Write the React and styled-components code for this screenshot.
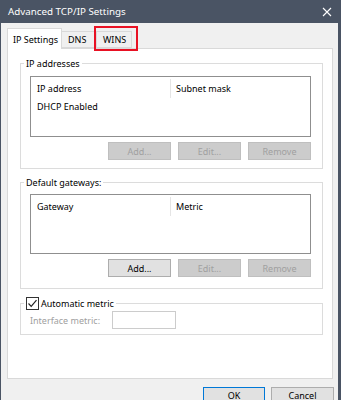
import React from 'react'
import styled, { createGlobalStyle } from 'styled-components'

const Global = createGlobalStyle`
  html, body { margin: 0; padding: 0; background: #f0f0f0; }
  body {
    font-family: "Noto Sans", "Open Sans", sans-serif;
    font-size: 9px;
    color: #000;
  }
`

const Window = styled.div`
  width: 341px;
  height: 400px;
  box-sizing: border-box;
  overflow: hidden;
  background: #f0f0f0;
  border-left: 1px solid #4a5464;
  border-right: 3px solid #4a5464;
  display: flex;
  flex-direction: column;
`

const TitleBar = styled.div`
  height: 23px;
  flex: none;
  background: #4a5464;
  color: #fff;
  display: flex;
  align-items: center;
  justify-content: space-between;
  padding: 0 6px 0 7px;
  font-size: 9.8px;
`

const Body = styled.div`
  padding: 5px 0 0 6px;
  display: flex;
  flex-direction: column;
`

const TabRow = styled.div`
  display: flex;
  align-items: flex-end;
  height: 20px;
`

const Tab = styled.div`
  position: relative;
  box-sizing: border-box;
  width: ${p => p.$w}px;
  height: ${p => (p.$active ? 21 : 17)}px;
  margin-bottom: ${p => (p.$active ? -1 : 0)}px;
  z-index: ${p => (p.$active ? 2 : 1)};
  background: ${p => (p.$active ? '#fff' : '#f0f0f0')};
  border: 1px solid #d9d9d9;
  border-bottom: ${p => (p.$active ? 'none' : '1px solid #d9d9d9')};
  border-left: ${p => (p.$first ? '1px solid #d9d9d9' : 'none')};
  padding-left: ${p => p.$pad}px;
  display: flex;
  align-items: center;
  white-space: nowrap;
  line-height: 1;

  ${p => p.$marked && `
    &::after {
      content: '';
      position: absolute;
      left: -3px;
      right: -7px;
      top: -6px;
      bottom: -4px;
      border: 2px solid #e81123;
    }
  `}
`

const Panel = styled.div`
  width: 326px;
  height: 331px;
  box-sizing: border-box;
  background: #fff;
  border: 1px solid #d9d9d9;
  display: flex;
  flex-direction: column;
`

const Group = styled.fieldset`
  margin: ${p => p.$top}px 9px 0 12px;
  border: 1px solid #dcdcdc;
  padding: 0 11px ${p => p.$bottom}px 9px;
  min-width: 0;
`

const Legend = styled.legend`
  margin-left: -6px;
  padding: 0 2px;
  line-height: 13px;
  height: 13px;
  display: flex;
  align-items: center;
  gap: 2px;
`

const ListBox = styled.div`
  height: ${p => p.$h}px;
  box-sizing: border-box;
  border: 1px solid #8f8f8f;
  margin-top: ${p => p.$gap}px;
  background: #fff;
`

const HeaderRow = styled.div`
  display: grid;
  grid-template-columns: 140px 1fr;
  height: 21px;
`

const HeaderCell = styled.div`
  display: flex;
  align-items: center;
  padding-left: ${p => (p.$first ? 6 : 5)}px;
  border-right: ${p => (p.$first ? '1px solid #e5e5e5' : 'none')};
  margin: 2px 0 0;
`

const Row = styled.div`
  height: 16px;
  display: flex;
  align-items: center;
  padding-left: 6px;
`

const ButtonRow = styled.div`
  display: flex;
  justify-content: flex-end;
  gap: 7px;
  margin-top: 5px;
`

const Button = styled.div`
  box-sizing: border-box;
  width: ${p => p.$w || 63}px;
  height: ${p => p.$h || 18}px;
  padding-bottom: ${p => p.$lift || 0}px;
  display: flex;
  align-items: center;
  justify-content: center;
  line-height: 1;
  background: ${p => (p.$disabled ? '#cccccc' : '#e1e1e1')};
  border: 1px solid ${p => (p.$disabled ? '#bfbfbf' : p.$default ? '#0078d7' : '#adadad')};
  color: ${p => (p.$disabled ? '#a0a0a0' : '#000')};
`

const Check = styled.span`
  box-sizing: border-box;
  width: 13px;
  height: 13px;
  border: 1px solid #333;
  background: #fff;
  display: flex;
  align-items: center;
  justify-content: center;
`

const MetricRow = styled.div`
  display: flex;
  align-items: center;
  margin-top: 1px;
  color: #a0a0a0;
`

const MetricLabel = styled.span`
  width: 82px;
`

const MetricInput = styled.div`
  box-sizing: border-box;
  width: 64px;
  height: 18px;
  border: 1px solid #cccccc;
  background: #fff;
`

const Footer = styled.div`
  display: flex;
  justify-content: flex-end;
  gap: 6px;
  padding: 8px 4px 0 0;
`

function List({ cols, rows, h, gap }) {
  return (
    <ListBox $h={h} $gap={gap}>
      <HeaderRow>
        <HeaderCell $first>{cols[0]}</HeaderCell>
        <HeaderCell>{cols[1]}</HeaderCell>
      </HeaderRow>
      {rows.map(r => <Row key={r}>{r}</Row>)}
    </ListBox>
  )
}

export default function App() {
  return (
    <Window>
      <Global />
      <TitleBar>
        <span>Advanced TCP/IP Settings</span>
        <svg width="10" height="10" viewBox="0 0 10 10">
          <path d="M1 1L9 9M9 1L1 9" stroke="#fff" strokeWidth="1.1" />
        </svg>
      </TitleBar>
      <Body>
        <TabRow>
          <Tab $active $first $w={55} $pad={5}>IP Settings</Tab>
          <Tab $w={35} $pad={6}>DNS</Tab>
          <Tab $w={35} $pad={6} $marked>WINS</Tab>
        </TabRow>
        <Panel>
          <Group $top={8} $bottom={8}>
            <Legend>IP addresses</Legend>
            <List h={61} gap={6} cols={['IP address', 'Subnet mask']} rows={['DHCP Enabled']} />
            <ButtonRow>
              <Button $disabled>Add...</Button>
              <Button $disabled>Edit...</Button>
              <Button $disabled>Remove</Button>
            </ButtonRow>
          </Group>
          <Group $top={7} $bottom={11}>
            <Legend>Default gateways:</Legend>
            <List h={60} gap={5} cols={['Gateway', 'Metric']} rows={[]} />
            <ButtonRow>
              <Button>Add...</Button>
              <Button $disabled>Edit...</Button>
              <Button $disabled>Remove</Button>
            </ButtonRow>
          </Group>
          <Group $top={8} $bottom={5}>
            <Legend>
              <Check>
                <svg width="11" height="11" viewBox="0 0 11 11">
                  <path d="M1.5 5.5L4.2 8.3L9.5 2.2" fill="none" stroke="#222" strokeWidth="1.2" />
                </svg>
              </Check>
              Automatic metric
            </Legend>
            <MetricRow>
              <MetricLabel>Interface metric:</MetricLabel>
              <MetricInput />
            </MetricRow>
          </Group>
        </Panel>
        <Footer>
          <Button $default $w={62} $h={23} $lift={7}>OK</Button>
          <Button $w={63} $h={23} $lift={7}>Cancel</Button>
        </Footer>
      </Body>
    </Window>
  )
}
